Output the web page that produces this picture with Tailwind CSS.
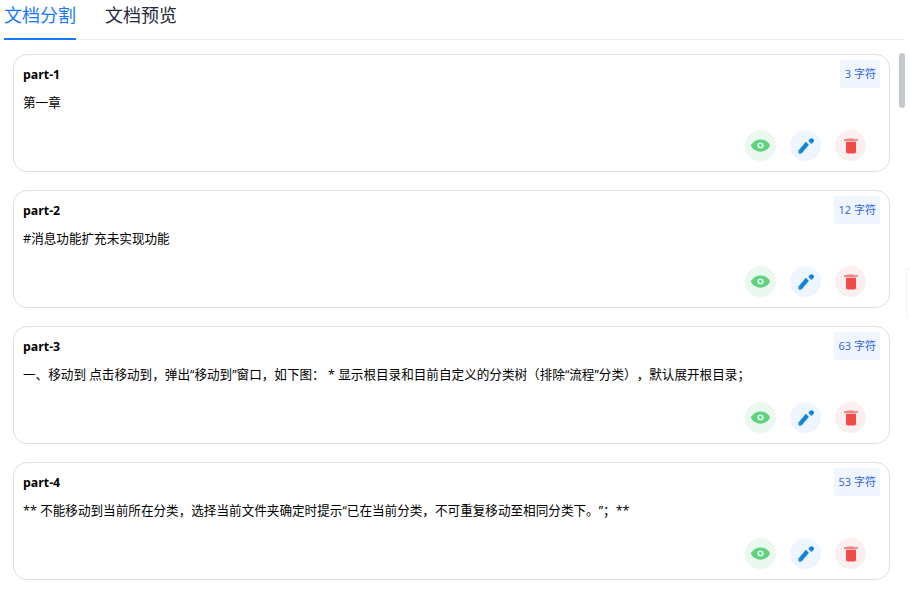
<!DOCTYPE html>
<html lang="zh">
<head>
<meta charset="utf-8">
<title>文档分割</title>
<script src="https://cdn.jsdelivr.net/npm/@tailwindcss/browser@4"></script>
</head>
<body class="h-[595px] w-[910px] overflow-hidden bg-white text-black font-['Open_Sans','Noto_Sans_CJK_SC',sans-serif]">
  <!-- Tabs -->
  <nav class="mx-[4px] w-[900px] h-[40px] flex gap-[29px] border-b border-[#eeeeee] text-[18px]">
    <a class="h-[40px] w-[72px] leading-[30px] whitespace-nowrap text-[#1677ff] border-b-2 border-[#1677ff]">文档分割</a>
    <a class="h-[40px] w-[72px] leading-[30px] whitespace-nowrap text-[#1f2937]">文档预览</a>
  </nav>

  <div class="relative flex">
    <!-- Part list -->
    <main class="ml-[13px] mt-[14px] w-[877px] flex flex-col gap-[18px]">

      <div class="h-[118px] flex flex-col border border-[#dfdfdf] rounded-[14px] pl-[9px] pr-[9px] pt-[5px]">
        <div class="flex justify-between h-[29px]">
          <span class="text-[12.300px] font-bold leading-[29px]">part-1</span>
          <span class="h-[28px] pl-[5px] pr-[4px] bg-[#eff6ff] text-[#2f5fe0] text-[11px] leading-[28px] rounded-[2px]">3 字符</span>
        </div>
        <p class="mt-[4px] text-[12.600px] leading-[20px] [text-spacing-trim:space-all]">第一章</p>
        <div class="mt-auto mb-[10px] pr-[14px] flex justify-end gap-[14px]">
          <button class="w-[31px] h-[31px] rounded-full bg-[#eaf8ef] flex items-center justify-center">
            <svg class="w-[21px] h-[21px]" viewBox="0 0 24 24"><path fill="#5fd37d" fill-rule="evenodd" d="M12 5C7 5 2.700 8 1 12c1.700 4 6 7 11 7s9.300-3 11-7c-1.700-4-6-7-11-7zm0 10.500a3.500 3.500 0 1 1 0-7 3.500 3.500 0 0 1 0 7z"/><circle cx="12" cy="12" r="1.700" fill="#5fd37d"/></svg>
          </button>
          <button class="w-[31px] h-[31px] rounded-full bg-[#edf6fe] flex items-center justify-center">
            <svg class="w-[20px] h-[20px]" viewBox="0 0 24 24" fill="#0f86d8"><path d="M3 17.250V21h3.750L15.500 10.500l-3.750-3.750L3 17.250z"/><path d="M20.500 7.500a2.400 2.400 0 0 0 0-3.800 2.500 2.500 0 0 0-3.800 0l-2 2 3.800 3.800 2-2z"/></svg>
          </button>
          <button class="w-[31px] h-[31px] rounded-full bg-[#fcefef] flex items-center justify-center">
            <svg class="w-[20px] h-[20px]" viewBox="0 0 24 24"><path fill="#f98080" d="M15.500 4l-1-1h-7l-1 1H3.500v2h17V4z"/><path fill="#f14b4b" d="M6 19c0 1.100.9 2 2 2h8c1.100 0 2-.9 2-2V7H6v12z"/></svg>
          </button>
        </div>
      </div>

      <div class="h-[118px] flex flex-col border border-[#dfdfdf] rounded-[14px] pl-[9px] pr-[9px] pt-[5px]">
        <div class="flex justify-between h-[29px]">
          <span class="text-[12.300px] font-bold leading-[29px]">part-2</span>
          <span class="h-[28px] pl-[5px] pr-[4px] bg-[#eff6ff] text-[#2f5fe0] text-[11px] leading-[28px] rounded-[2px]">12 字符</span>
        </div>
        <p class="mt-[4px] text-[12.600px] leading-[20px] [text-spacing-trim:space-all]">#消息功能扩充未实现功能</p>
        <div class="mt-auto mb-[10px] pr-[14px] flex justify-end gap-[14px]">
          <button class="w-[31px] h-[31px] rounded-full bg-[#eaf8ef] flex items-center justify-center">
            <svg class="w-[21px] h-[21px]" viewBox="0 0 24 24"><path fill="#5fd37d" fill-rule="evenodd" d="M12 5C7 5 2.700 8 1 12c1.700 4 6 7 11 7s9.300-3 11-7c-1.700-4-6-7-11-7zm0 10.500a3.500 3.500 0 1 1 0-7 3.500 3.500 0 0 1 0 7z"/><circle cx="12" cy="12" r="1.700" fill="#5fd37d"/></svg>
          </button>
          <button class="w-[31px] h-[31px] rounded-full bg-[#edf6fe] flex items-center justify-center">
            <svg class="w-[20px] h-[20px]" viewBox="0 0 24 24" fill="#0f86d8"><path d="M3 17.250V21h3.750L15.500 10.500l-3.750-3.750L3 17.250z"/><path d="M20.500 7.500a2.400 2.400 0 0 0 0-3.800 2.500 2.500 0 0 0-3.800 0l-2 2 3.800 3.800 2-2z"/></svg>
          </button>
          <button class="w-[31px] h-[31px] rounded-full bg-[#fcefef] flex items-center justify-center">
            <svg class="w-[20px] h-[20px]" viewBox="0 0 24 24"><path fill="#f98080" d="M15.500 4l-1-1h-7l-1 1H3.500v2h17V4z"/><path fill="#f14b4b" d="M6 19c0 1.100.9 2 2 2h8c1.100 0 2-.9 2-2V7H6v12z"/></svg>
          </button>
        </div>
      </div>

      <div class="h-[118px] flex flex-col border border-[#dfdfdf] rounded-[14px] pl-[9px] pr-[9px] pt-[5px]">
        <div class="flex justify-between h-[29px]">
          <span class="text-[12.300px] font-bold leading-[29px]">part-3</span>
          <span class="h-[28px] pl-[5px] pr-[4px] bg-[#eff6ff] text-[#2f5fe0] text-[11px] leading-[28px] rounded-[2px]">63 字符</span>
        </div>
        <p class="mt-[4px] text-[12.600px] leading-[20px] [text-spacing-trim:space-all]">一、移动到 点击移动到，弹出“移动到”窗口，如下图： * 显示根目录和目前自定义的分类树（排除“流程”分类），默认展开根目录；</p>
        <div class="mt-auto mb-[10px] pr-[14px] flex justify-end gap-[14px]">
          <button class="w-[31px] h-[31px] rounded-full bg-[#eaf8ef] flex items-center justify-center">
            <svg class="w-[21px] h-[21px]" viewBox="0 0 24 24"><path fill="#5fd37d" fill-rule="evenodd" d="M12 5C7 5 2.700 8 1 12c1.700 4 6 7 11 7s9.300-3 11-7c-1.700-4-6-7-11-7zm0 10.500a3.500 3.500 0 1 1 0-7 3.500 3.500 0 0 1 0 7z"/><circle cx="12" cy="12" r="1.700" fill="#5fd37d"/></svg>
          </button>
          <button class="w-[31px] h-[31px] rounded-full bg-[#edf6fe] flex items-center justify-center">
            <svg class="w-[20px] h-[20px]" viewBox="0 0 24 24" fill="#0f86d8"><path d="M3 17.250V21h3.750L15.500 10.500l-3.750-3.750L3 17.250z"/><path d="M20.500 7.500a2.400 2.400 0 0 0 0-3.800 2.500 2.500 0 0 0-3.800 0l-2 2 3.800 3.800 2-2z"/></svg>
          </button>
          <button class="w-[31px] h-[31px] rounded-full bg-[#fcefef] flex items-center justify-center">
            <svg class="w-[20px] h-[20px]" viewBox="0 0 24 24"><path fill="#f98080" d="M15.500 4l-1-1h-7l-1 1H3.500v2h17V4z"/><path fill="#f14b4b" d="M6 19c0 1.100.9 2 2 2h8c1.100 0 2-.9 2-2V7H6v12z"/></svg>
          </button>
        </div>
      </div>

      <div class="h-[118px] flex flex-col border border-[#dfdfdf] rounded-[14px] pl-[9px] pr-[9px] pt-[5px]">
        <div class="flex justify-between h-[29px]">
          <span class="text-[12.300px] font-bold leading-[29px]">part-4</span>
          <span class="h-[28px] pl-[5px] pr-[4px] bg-[#eff6ff] text-[#2f5fe0] text-[11px] leading-[28px] rounded-[2px]">53 字符</span>
        </div>
        <p class="mt-[4px] text-[12.600px] leading-[20px] [text-spacing-trim:space-all]">** 不能移动到当前所在分类，选择当前文件夹确定时提示“已在当前分类，不可重复移动至相同分类下。”；**</p>
        <div class="mt-auto mb-[10px] pr-[14px] flex justify-end gap-[14px]">
          <button class="w-[31px] h-[31px] rounded-full bg-[#eaf8ef] flex items-center justify-center">
            <svg class="w-[21px] h-[21px]" viewBox="0 0 24 24"><path fill="#5fd37d" fill-rule="evenodd" d="M12 5C7 5 2.700 8 1 12c1.700 4 6 7 11 7s9.300-3 11-7c-1.700-4-6-7-11-7zm0 10.500a3.500 3.500 0 1 1 0-7 3.500 3.500 0 0 1 0 7z"/><circle cx="12" cy="12" r="1.700" fill="#5fd37d"/></svg>
          </button>
          <button class="w-[31px] h-[31px] rounded-full bg-[#edf6fe] flex items-center justify-center">
            <svg class="w-[20px] h-[20px]" viewBox="0 0 24 24" fill="#0f86d8"><path d="M3 17.250V21h3.750L15.500 10.500l-3.750-3.750L3 17.250z"/><path d="M20.500 7.500a2.400 2.400 0 0 0 0-3.800 2.500 2.500 0 0 0-3.800 0l-2 2 3.800 3.800 2-2z"/></svg>
          </button>
          <button class="w-[31px] h-[31px] rounded-full bg-[#fcefef] flex items-center justify-center">
            <svg class="w-[20px] h-[20px]" viewBox="0 0 24 24"><path fill="#f98080" d="M15.500 4l-1-1h-7l-1 1H3.500v2h17V4z"/><path fill="#f14b4b" d="M6 19c0 1.100.9 2 2 2h8c1.100 0 2-.9 2-2V7H6v12z"/></svg>
          </button>
        </div>
      </div>
    </main>

    <!-- Scrollbar thumb and the edge of a side panel -->
    <div class="absolute left-[899px] top-[13px] w-[6px] h-[55px] rounded-full bg-[#c4c9d0]"></div>
    <div class="absolute left-[906px] top-[228px] w-[4px] h-[50px] rounded-l-[4px] border border-r-0 border-[#f3f3f3] bg-white"></div>
  </div>
</body>
</html>
